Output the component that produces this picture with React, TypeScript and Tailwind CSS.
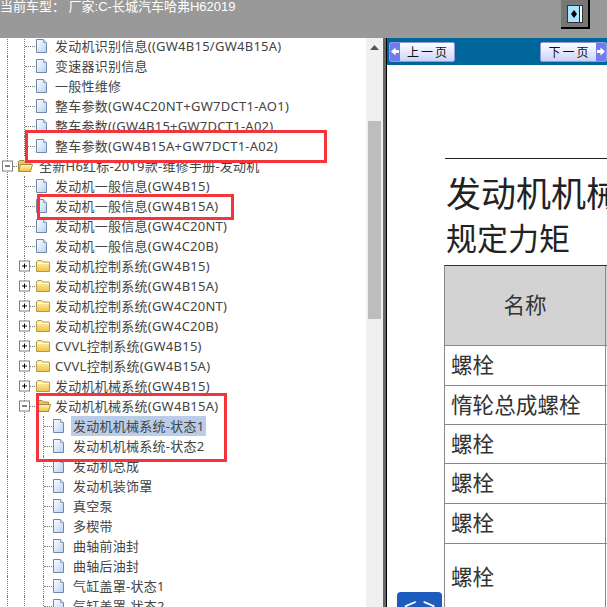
const cjk = '[font-family:"Noto_Sans","Noto_Sans_CJK_SC",sans-serif]';

type RowKind = 'doc' | 'leaf' | 'mid' | 'midOpen' | 'root';

const rows: { kind: RowKind; text: string; active?: boolean }[] = [
  { kind: 'doc', text: '发动机识别信息((GW4B15/GW4B15A)' },
  { kind: 'doc', text: '变速器识别信息' },
  { kind: 'doc', text: '一般性维修' },
  { kind: 'doc', text: '整车参数(GW4C20NT+GW7DCT1-AO1)' },
  { kind: 'doc', text: '整车参数((GW4B15+GW7DCT1-A02)' },
  { kind: 'doc', text: '整车参数(GW4B15A+GW7DCT1-A02)' },
  { kind: 'root', text: '全新H6红标-2019款-维修手册-发动机' },
  { kind: 'doc', text: '发动机一般信息(GW4B15)' },
  { kind: 'doc', text: '发动机一般信息(GW4B15A)' },
  { kind: 'doc', text: '发动机一般信息(GW4C20NT)' },
  { kind: 'doc', text: '发动机一般信息(GW4C20B)' },
  { kind: 'mid', text: '发动机控制系统(GW4B15)' },
  { kind: 'mid', text: '发动机控制系统(GW4B15A)' },
  { kind: 'mid', text: '发动机控制系统(GW4C20NT)' },
  { kind: 'mid', text: '发动机控制系统(GW4C20B)' },
  { kind: 'mid', text: 'CVVL控制系统(GW4B15)' },
  { kind: 'mid', text: 'CVVL控制系统(GW4B15A)' },
  { kind: 'mid', text: '发动机机械系统(GW4B15)' },
  { kind: 'midOpen', text: '发动机机械系统(GW4B15A)' },
  { kind: 'leaf', text: '发动机机械系统-状态1', active: true },
  { kind: 'leaf', text: '发动机机械系统-状态2' },
  { kind: 'leaf', text: '发动机总成' },
  { kind: 'leaf', text: '发动机装饰罩' },
  { kind: 'leaf', text: '真空泵' },
  { kind: 'leaf', text: '多楔带' },
  { kind: 'leaf', text: '曲轴前油封' },
  { kind: 'leaf', text: '曲轴后油封' },
  { kind: 'leaf', text: '气缸盖罩-状态1' },
  { kind: 'leaf', text: '气缸盖罩-状态2' },
];

function DocIcon() {
  return (
    <svg width="13" height="16" viewBox="0 0 13 16" className="shrink-0">
      <defs>
        <linearGradient id="docFill" x1="0" y1="0" x2="1" y2="1">
          <stop offset="0" stopColor="#ffffff" />
          <stop offset="1" stopColor="#b9d0f2" />
        </linearGradient>
      </defs>
      <path d="M1.5 1.5H8.5L11.5 4.5V14.5H1.5Z" fill="url(#docFill)" stroke="#6f87a8" />
      <path d="M8.5 1.5V4.5H11.5" fill="#dfe9f7" stroke="#8fa3bf" />
    </svg>
  );
}

function FolderIcon({ open }: { open?: boolean }) {
  return (
    <svg width="16" height="14" viewBox="0 0 16 14" className="shrink-0">
      <defs>
        <linearGradient id="folderFill" x1="0" y1="0" x2="0" y2="1">
          <stop offset="0" stopColor="#fff6c4" />
          <stop offset="1" stopColor="#f0c23e" />
        </linearGradient>
      </defs>
      {open ? (
        <>
          <path d="M1.5 12.5V2.5L3 1.5H7L8 3H13.5V12.5Z" fill="#e8c865" stroke="#a88a3a" />
          <path d="M1.5 12.5L3.5 5.5H15.5L13.5 12.5Z" fill="url(#folderFill)" stroke="#a88a3a" />
        </>
      ) : (
        <>
          <path d="M1.5 12.5V2.5L3 1.5H6.5L8 3H14L14.5 4V12.5Z" fill="url(#folderFill)" stroke="#b59a4c" />
          <path d="M2 4.5H14" stroke="#fffbe0" />
        </>
      )}
    </svg>
  );
}

// expander box, with the dotted tree line running through it
function Toggle({ open }: { open?: boolean }) {
  return (
    <svg width="11" height="20" viewBox="0 0 11 20" className="shrink-0">
      <path d="M5.5 0V20" stroke="#777" strokeDasharray="1 1" />
      <rect x="0.5" y="5" width="10" height="10" fill="#fff" stroke="#808080" />
      <path d="M3 10H8" stroke="#000" />
      {!open && <path d="M5.5 7.5V12.5" stroke="#000" />}
    </svg>
  );
}

function Guide({ className }: { className: string }) {
  return <div className={`h-full shrink-0 border-l border-dotted border-[#777] ${className}`} />;
}

function Elbow({ cell, dots }: { cell: string; dots: string }) {
  return (
    <div className={`flex h-full shrink-0 items-center border-l border-dotted border-[#777] ${cell}`}>
      <div className={`h-0 border-t border-dotted border-[#777] ${dots}`} />
    </div>
  );
}

function TreeRow({ kind, text, active }: { kind: RowKind; text: string; active?: boolean }) {
  const label = (
    <span className={`whitespace-nowrap text-[13px] leading-[20px] tracking-[0.25px] text-[#444] ${active ? 'bg-[#b9cde9] px-[2px] -mx-[2px]' : ''}`}>{text}</span>
  );

  if (kind === 'root') {
    return (
      <div className="flex h-5 items-center pl-[2px]">
        <Toggle open />
        <div className="h-0 w-[4px] border-t border-dotted border-[#777]" />
        <FolderIcon open />
        <div className="w-[6px]" />
        {label}
      </div>
    );
  }
  if (kind === 'mid' || kind === 'midOpen') {
    return (
      <div className="flex h-5 items-center pl-[7px]">
        <Guide className="w-[12px]" />
        <Toggle open={kind === 'midOpen'} />
        <div className="h-0 w-[5px] border-t border-dotted border-[#777]" />
        <FolderIcon open={kind === 'midOpen'} />
        <div className="w-[4px]" />
        {label}
      </div>
    );
  }
  if (kind === 'doc') {
    return (
      <div className="flex h-5 items-center pl-[7px]">
        <Guide className="w-[17px]" />
        <Elbow cell="w-[11px]" dots="w-[10px]" />
        <DocIcon />
        <div className="w-[7px]" />
        {label}
      </div>
    );
  }
  return (
    <div className="flex h-5 items-center pl-[7px]">
      <Guide className="w-[17px]" />
      <Guide className="w-[19px]" />
      <Elbow cell="w-[9px]" dots="w-[8px]" />
      <DocIcon />
      <div className="w-[8px]" />
      {label}
    </div>
  );
}

function PageButton({ text, next }: { text: string; next?: boolean }) {
  const arrow = (
    <div className="flex h-full w-[10px] shrink-0 items-center justify-center bg-[#6f7cf0]">
      <svg width="8" height="9" viewBox="0 0 8 9">
        <path d={next ? 'M0 3H3.5V0.5L8 4.5L3.5 8.5V6H0Z' : 'M8 3H4.5V0.5L0 4.5L4.5 8.5V6H8Z'} fill="#fff" />
      </svg>
    </div>
  );
  return (
    <div className={`flex h-[20px] items-center overflow-hidden rounded-[2px] border border-[#8d98e0] bg-gradient-to-b from-[#ffffff] to-[#cdd2f7] ${next ? 'w-[67px]' : 'w-[66px]'}`}>
      {!next && arrow}
      <span className="flex-1 pl-[2px] text-center text-[12px] leading-none tracking-[2px] text-[#111] [font-family:'Noto_Sans_CJK_SC',sans-serif]">{text}</span>
      {next && arrow}
    </div>
  );
}

const tableRows = [
  { name: '螺栓', h: 'h-[40px]' },
  { name: '惰轮总成螺栓', h: 'h-[39px]' },
  { name: '螺栓', h: 'h-[39px]' },
  { name: '螺栓', h: 'h-[40px]' },
  { name: '螺栓', h: 'h-[40px]' },
  { name: '螺栓', h: 'h-[68px]' },
];

export default function App() {
  return (
    <div className={`relative flex h-[607px] w-[607px] flex-col overflow-hidden bg-white ${cjk}`}>
      <header className="flex h-[38px] shrink-0 items-start justify-between bg-[#999999] pr-[17px]">
        <span className="whitespace-nowrap text-[13px] leading-[14px] text-white [font-family:'Liberation_Sans','Noto_Sans_CJK_SC',sans-serif]">当前车型： 厂家:C-长城汽车哈弗H62019</span>
        <div className="flex h-[29px] w-[29px] items-center justify-center border-r-2 border-b-2 border-black bg-[#777777]">
          <div className="flex h-[18px] w-[16px] items-center justify-center border border-[#333] bg-[#a8e4ff]">
            <svg width="14" height="16" viewBox="0 0 14 16">
              <path d="M6 4L9 8L6 12L3 8Z" fill="#000" />
              <path d="M11.5 0V16" stroke="#222" />
              <path d="M13 0V16" stroke="#fff" strokeWidth="2" />
            </svg>
          </div>
        </div>
      </header>

      <div className="flex min-h-0 flex-1">
        <div className="w-[366px] shrink-0 overflow-hidden">
          <div className="-mt-[2px]">
            {rows.map((row) => (
              <TreeRow key={row.text} kind={row.kind} text={row.text} active={row.active} />
            ))}
          </div>
        </div>

        <div className="flex w-[17px] shrink-0 flex-col items-center bg-[#f0f0f0]">
          <svg width="9" height="6" viewBox="0 0 9 6" className="mt-[7px]">
            <path d="M4.5 0L9 5H0Z" fill="#555" />
          </svg>
          <div className="mt-[70px] h-[198px] w-[13px] bg-[#bdbdbd]" />
        </div>

        <div className="w-[3px] shrink-0 bg-[#666666]" />
        <div className="w-[1px] shrink-0 bg-black" />

        <div className="relative min-w-0 flex-1 overflow-hidden">
          <div className="flex h-[27px] items-center justify-between bg-[#006699] pl-[2px]">
            <PageButton text="上一页" />
            <PageButton text="下一页" next />
          </div>

          <div className="ml-[58px] mt-[93px] w-[300px] border-t border-[#222]" />
          <h1 className="ml-[59px] mt-[15px] whitespace-nowrap text-[35px] font-normal leading-[40px] text-[#222]">发动机机械系统</h1>
          <h2 className="ml-[59px] mt-[5px] whitespace-nowrap text-[31px] font-normal leading-[38px] text-[#222]">规定力矩</h2>

          <div className="ml-[57px] mt-[8px] w-[300px] border-l border-t border-l-[#888] border-t-[#333]">
            <div className="flex h-[80px] border-b border-[#888] bg-[#d3d3d3]">
              <div className="flex w-[161px] items-center justify-center border-r border-[#888] text-[21.6px] text-[#333]">名称</div>
            </div>
            {tableRows.map((row, i) => (
              <div key={i} className={`flex ${row.h} border-b border-[#888]`}>
                <div className="flex w-[161px] items-center border-r border-[#888] pl-[6px] text-[21.6px] text-[#333]">{row.name}</div>
              </div>
            ))}
          </div>

          <div className="absolute left-[10px] top-[554px] flex h-[20px] w-[45px] items-start justify-center gap-[6px] rounded-t-[4px] bg-[#1c5cbc] pt-[4px] text-[22px] leading-[22px] text-white [font-family:'Liberation_Sans',sans-serif]">
            <span>&lt;</span>
            <span>&gt;</span>
          </div>
        </div>
      </div>

      <div className="absolute left-[25px] top-[130px] h-[33px] w-[302px] border-[3px] border-[#f5343a]" />
      <div className="absolute left-[37px] top-[194px] h-[26px] w-[197px] border-[3px] border-[#f5343a]" />
      <div className="absolute left-[36px] top-[393px] h-[69px] w-[191px] border-[3px] border-[#f5343a]" />
    </div>
  );
}
